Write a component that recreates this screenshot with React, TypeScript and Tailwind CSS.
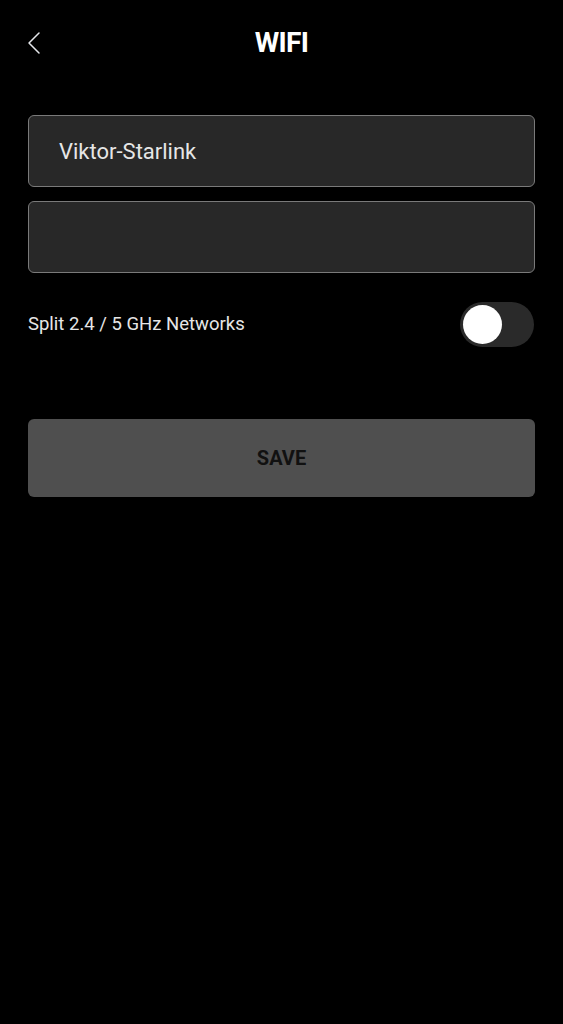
import { ChevronLeft } from "lucide-react";

export default function App() {
  return (
    <div
      className="w-[563px] h-[1024px] bg-black text-white flex flex-col"
      style={{ fontFamily: "Roboto, 'Liberation Sans', sans-serif" }}
    >
      <header className="relative h-[86px] flex items-center justify-center">
        <button className="absolute left-[14px] top-[23px] text-gray-200">
          <ChevronLeft className="w-[40px] h-[40px]" strokeWidth={0.9} />
        </button>
        <h1 className="text-[28px] font-bold tracking-tight">WIFI</h1>
      </header>

      <div className="px-[28px] pt-[29px] flex flex-col">
        <div className="h-[72px] rounded-[6px] border border-[#7a7a7a] bg-[#282828] flex items-center px-[30px]">
          <span className="text-[22px] text-[#e6e6e6]">Viktor-Starlink</span>
        </div>
        <div className="mt-[14px] h-[72px] rounded-[6px] border border-[#7a7a7a] bg-[#282828]" />

        <div className="mt-[29px] flex items-center justify-between">
          <span className="text-[18.5px] text-[#e6e6e6]">Split 2.4 / 5 GHz Networks</span>
          <div className="w-[74px] h-[45px] rounded-full bg-[#2a2a2a] flex items-center px-[3px] mr-[1px]">
            <div className="w-[39px] h-[39px] rounded-full bg-white" />
          </div>
        </div>

        <button className="mt-[72px] h-[78px] rounded-[6px] bg-[#4f4f4f] flex items-center justify-center">
          <span className="text-[20px] font-bold text-[#111]">SAVE</span>
        </button>
      </div>
    </div>
  );
}
